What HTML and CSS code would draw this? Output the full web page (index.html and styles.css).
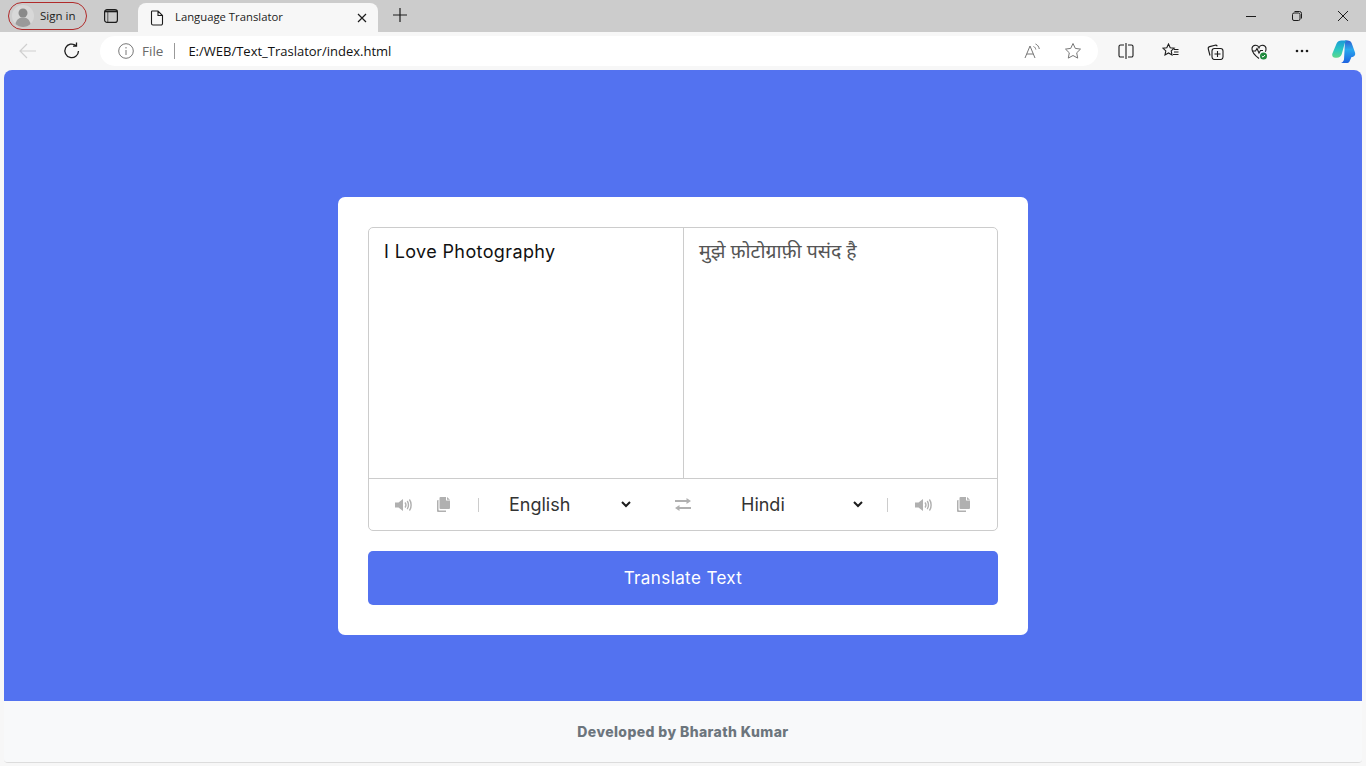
FILE: index.html
```html
<!DOCTYPE html>
<html lang="en">
  <head>
    <title>Language Translator</title>
    <meta charset="utf-8">
    <link rel="stylesheet" href="styles.css">
  </head>
  <body>
    <div class="tabstrip">
      <div class="signin">
        <svg class="avatar" width="22" height="22" viewBox="0 0 22 22"><circle cx="11" cy="11" r="11" fill="#d8d8d8"/><circle cx="11" cy="8" r="4.5" fill="#8a8a8a"/><path d="M3.500 19c1-5 4-6.500 7.500-6.500s6.500 1.500 7.500 6.500c-2 2-4.500 3-7.500 3s-5.500-1-7.500-3z" fill="#9a9a9a"/></svg>
        <span>Sign in</span>
      </div>
      <svg class="tabs-btn" width="16" height="16" viewBox="0 0 16 16" fill="none" stroke="#1c1c1c" stroke-width="1.200"><rect x="1.600" y="1.600" width="12.800" height="12.800" rx="2.500"/><path d="M1.600 3.400h12.800" stroke-width="1.800"/><path d="M4.800 4v10" stroke-width=".7"/></svg>
      <div class="tab">
        <svg width="14" height="16" viewBox="0 0 14 16" fill="none" stroke="#1c1c1c" stroke-width="1.100"><path d="M2 1h6l4.500 4.500V13.500a1.500 1.500 0 0 1-1.500 1.500H3a1.500 1.500 0 0 1-1.500-1.500V2A1 1 0 0 1 2 1zM8 1v4.500h4.500"/></svg>
        <span class="tab-title">Language Translator</span>
        <svg width="10" height="10" viewBox="0 0 10 10" stroke="#1c1c1c" stroke-width="1.200"><path d="M1 1l8 8M9 1l-8 8"/></svg>
      </div>
      <svg class="new-tab" width="16" height="16" viewBox="0 0 16 16" stroke="#1c1c1c" stroke-width="1.200"><path d="M8 1v14M1 8h14"/></svg>
      <div class="win-controls">
        <svg width="10" height="10" viewBox="0 0 10 10" stroke="#1c1c1c"><path d="M0 5.500h10"/></svg>
        <svg width="10" height="10" viewBox="0 0 10 10" fill="none" stroke="#1c1c1c"><rect x=".5" y="2" width="7.500" height="7.500" rx="1.500"/><path d="M2.500 .5h5a2 2 0 0 1 2 2v5"/></svg>
        <svg width="10" height="10" viewBox="0 0 10 10" stroke="#1c1c1c"><path d="M0 0l10 10M10 0L0 10"/></svg>
      </div>
    </div>

    <div class="toolbar">
      <svg class="back" width="18" height="16" viewBox="0 0 18 16" fill="none" stroke="#cfcfcf" stroke-width="1.200"><path d="M17 8H1M8 1L1 8l7 7"/></svg>
      <svg class="reload" width="18" height="18" viewBox="0 0 18 18" fill="none" stroke="#1c1c1c" stroke-width="1.300"><path d="M15.500 9A6.800 6.800 0 1 1 13 3.600M13.500 .5v3.600H10"/></svg>
      <div class="address">
        <svg width="16" height="16" viewBox="0 0 16 16" fill="none" stroke="#777" stroke-width="1"><circle cx="8" cy="8" r="7.300"/><path d="M8 7v5M8 4v1.500"/></svg>
        <span class="file-label">File</span>
        <span class="addr-sep"></span>
        <span class="url">E:/WEB/Text_Traslator/index.html</span>
        <svg class="read-aloud" width="17" height="16" viewBox="0 0 17 16" fill="none" stroke="#777" stroke-width="1"><path d="M1 15L6 3l5 12M2.800 11h6.500M9.500 3.500c1.300.5 2 1.500 2.300 3M11.500 1c2 .8 3.300 2.500 3.800 5"/></svg>
        <svg class="fav" width="18" height="18" viewBox="0 0 18 18" fill="none" stroke="#777" stroke-width="1"><path d="M9 1.500l2.300 4.900 5.200.7-3.800 3.700 1 5.300L9 13.500l-4.700 2.600 1-5.300L1.500 7.100l5.200-.7z"/></svg>
      </div>
      <div class="tools">
        <svg width="16" height="16" viewBox="0 0 16 16" fill="none" stroke="#1c1c1c" stroke-width="1.100"><path d="M6 2H2.500A1.500 1.500 0 0 0 1 3.500v9A1.500 1.500 0 0 0 2.500 14H6M10 2h3.500A1.500 1.500 0 0 1 15 3.500v9a1.500 1.500 0 0 1-1.500 1.500H10M8 0v16"/></svg>
        <svg width="17" height="16" viewBox="0 0 17 16" fill="none" stroke="#1c1c1c" stroke-width="1.100"><path d="M6.500 1l1.700 3.700 4 .4-3 2.800.8 4-3.500-2-3.500 2 .8-4-3-2.800 4-.4zM12 6.500h4.500M12 9h4.500M11 11.500h5.500"/></svg>
        <svg width="17" height="17" viewBox="0 0 17 17" fill="none" stroke="#1c1c1c" stroke-width="1.100"><path d="M3 12.500L1.300 6a2 2 0 0 1 1.400-2.400L8 2.200a2 2 0 0 1 2.300 1"/><rect x="5" y="5.500" width="11" height="11" rx="2.500" fill="#f7f7f7"/><path d="M10.500 8v6M7.500 11h6"/></svg>
        <svg class="tool-health" width="17" height="17" viewBox="0 0 17 17" fill="none"><path d="M8 15.500C4 12.500 1 10 1 6a3.600 3.600 0 0 1 7-1.300A3.600 3.600 0 0 1 15 6c0 1-.2 2-.7 2.800M1.500 8h3l1.500-2.500 2 4.500 1.500-2.500h2.500" stroke="#1c1c1c" stroke-width="1.100"/><circle cx="12.500" cy="13" r="3.500" fill="#1e8a3c"/><path d="M10.800 13l1.200 1.200 2-2.200" stroke="#fff"/></svg>
        <svg class="tool-more" width="14" height="4" viewBox="0 0 14 4" fill="#1c1c1c"><circle cx="2" cy="2" r="1.300"/><circle cx="7" cy="2" r="1.300"/><circle cx="12" cy="2" r="1.300"/></svg>
        <svg class="copilot" width="24" height="24" viewBox="0 0 24 24"><defs><linearGradient id="cpa" x1="0" y1="0" x2="0" y2="1"><stop offset="0" stop-color="#1a9bd8"/><stop offset=".55" stop-color="#2cc8c0"/><stop offset="1" stop-color="#5ed88a"/></linearGradient><linearGradient id="cpb" x1="0" y1="0" x2="0" y2="1"><stop offset="0" stop-color="#2f5fd0"/><stop offset=".4" stop-color="#2aa8ee"/><stop offset="1" stop-color="#1e62e0"/></linearGradient></defs><path d="M13 1.500h2.500c2.300 0 3.700 1.200 4.300 3l3.200 9c.8 2.800-1 4.500-3.500 4.500l-2 4.500c-.6 1-1.700 1.500-3 1.500H9c1.500-.6 2.500-1.800 3-3.500z" fill="url(#cpb)"/><path d="M9.500 1.500h7c-2 0-3.300 1.300-3.900 3.200L9.800 15c-.7 2.300-2.600 3.800-5 3.800H3.300C1 18.800-.4 16.800.4 14.500L4.600 4.500C5.300 2.600 7.300 1.500 9.500 1.500z" fill="url(#cpa)"/></svg>
      </div>
    </div>

    <div class="page">
      <main class="stage">
        <div class="card">
          <div class="wrapper">
            <div class="text-input">
              <textarea class="from-text" spellcheck="false">I Love Photography</textarea>
              <textarea class="to-text" spellcheck="false" readonly>मुझे फ़ोटोग्राफ़ी पसंद है</textarea>
            </div>
            <div class="controls">
              <svg class="speak" width="17" height="14" viewBox="0 0 17 14"><path d="M0 4.500h3.500L8 1v12L3.500 9.500H0z" fill="#b0b0b0"/><path d="M10 4.500c1 1.300 1 3.700 0 5M12.200 3c1.700 2 1.700 6 0 8M14.400 1.500c2.300 3 2.300 8 0 11" fill="none" stroke="#b0b0b0" stroke-width="1.400"/></svg>
              <svg class="copy" width="13" height="15" viewBox="0 0 13 15" fill="#b0b0b0"><path d="M3.500 0h5.500v3.500h4V11a1 1 0 0 1-1 1H3.500a1 1 0 0 1-1-1V1a1 1 0 0 1 1-1zM10 0l3 2.700h-3zM1.500 3v9.500a1 1 0 0 0 1 1H9V15H1a1 1 0 0 1-1-1V4a1 1 0 0 1 1-1z"/></svg>
              <span class="ctl-sep first"></span>
              <div class="lang">
                <span>English</span>
                <svg width="10" height="7" viewBox="0 0 10 7" fill="none" stroke="#1c1c1c" stroke-width="2"><path d="M1 1l4 4 4-4"/></svg>
              </div>
              <svg class="swap" width="16" height="13" viewBox="0 0 16 13" fill="#b0b0b0"><path d="M0 2h11.500V0L16 3l-4.500 3V4H0zM16 9H4.500V7L0 10l4.500 3v-2H16z"/></svg>
              <div class="lang hindi">
                <span>Hindi</span>
                <svg width="10" height="7" viewBox="0 0 10 7" fill="none" stroke="#1c1c1c" stroke-width="2"><path d="M1 1l4 4 4-4"/></svg>
              </div>
              <span class="ctl-sep last"></span>
              <svg class="speak" width="17" height="14" viewBox="0 0 17 14"><path d="M0 4.500h3.500L8 1v12L3.500 9.500H0z" fill="#b0b0b0"/><path d="M10 4.500c1 1.300 1 3.700 0 5M12.200 3c1.700 2 1.700 6 0 8M14.400 1.500c2.300 3 2.300 8 0 11" fill="none" stroke="#b0b0b0" stroke-width="1.400"/></svg>
              <svg class="copy" width="13" height="15" viewBox="0 0 13 15" fill="#b0b0b0"><path d="M3.500 0h5.500v3.500h4V11a1 1 0 0 1-1 1H3.500a1 1 0 0 1-1-1V1a1 1 0 0 1 1-1zM10 0l3 2.700h-3zM1.500 3v9.500a1 1 0 0 0 1 1H9V15H1a1 1 0 0 1-1-1V4a1 1 0 0 1 1-1z"/></svg>
            </div>
          </div>
          <button class="translate">Translate Text</button>
        </div>
      </main>
      <footer class="footer">Developed by Bharath Kumar</footer>
    </div>
  </body>
</html>
```

FILE: styles.css
```css
html, body {
  height: 100%;
  margin: 0;
}
body {
  height: 766px;
  overflow: hidden;
  background: #f7f7f7;
  font-family: "Segoe UI", "Open Sans", "Noto Sans", sans-serif;
  color: #1c1c1c;
}
svg {
  display: block;
  flex: none;
}

/* browser frame */
.tabstrip {
  display: flex;
  align-items: flex-end;
  height: 32px;
  padding-left: 8px;
  background: #cccccc;
}
.signin {
  display: flex;
  align-items: center;
  box-sizing: border-box;
  width: 79px;
  height: 28px;
  margin-bottom: 2px;
  padding-left: 3px;
  border: 1.5px solid #b02a2a;
  border-radius: 14px;
  font-size: 11.500px;
}
.signin span {
  margin-left: 6px;
  padding-bottom: 1px;
}
.tabs-btn {
  margin: 0 0 8px 16px;
}
.tab {
  display: flex;
  align-items: center;
  width: 240px;
  height: 29px;
  box-sizing: border-box;
  margin-left: 19px;
  padding: 0 11px 0 12px;
  background: #f7f7f7;
  border-radius: 8px 8px 0 0;
  font-size: 11.300px;
}
.tab-title {
  flex: 1;
  margin-left: 11px;
  padding-bottom: 3px;
}
.new-tab {
  margin: 0 0 9px 14px;
}
.win-controls {
  display: flex;
  gap: 36px;
  margin: 0 18px 11px auto;
}
.toolbar {
  display: flex;
  align-items: center;
  height: 38px;
  padding-left: 19px;
}
.reload {
  margin-left: 26px;
}
.address {
  display: flex;
  align-items: center;
  box-sizing: border-box;
  width: 998px;
  height: 30px;
  margin-left: 19px;
  padding: 0 16px 0 18px;
  background: #fff;
  border-radius: 15px;
  font-size: 13px;
}
.file-label {
  margin-left: 8px;
  font-size: 13.500px;
  color: #6a6a6a;
}
.addr-sep {
  width: 1px;
  height: 16px;
  margin: 0 13px 0 11px;
  background: #999;
}
.url {
  flex: 1;
  color: #111;
}
.fav {
  margin-left: 23px;
}
.tools {
  display: flex;
  align-items: center;
  gap: 28px;
  margin-left: 20px;
}
.tool-health,
.tool-more {
  margin-left: -1px;
}
.tools .copilot {
  margin-left: -5px;
}

/* page */
.page {
  display: flex;
  flex-direction: column;
  height: 693px;
  margin: 0 4px;
  overflow: hidden;
  border-radius: 8px 8px 4px 4px;
  border-bottom: 1px solid #dcdcdc;
  box-sizing: border-box;
}
.stage {
  display: flex;
  align-items: flex-start;
  justify-content: center;
  height: 631px;
  box-sizing: border-box;
  padding-top: 127px;
  flex: none;
  background: #5372f0;
}
.card {
  box-sizing: border-box;
  width: 690px;
  height: 438px;
  padding: 30px;
  background: #fff;
  border-radius: 7px;
}
.wrapper {
  height: 304px;
  box-sizing: border-box;
  border: 1px solid #ccc;
  border-radius: 5px;
}
.text-input {
  display: flex;
  height: 250px;
  border-bottom: 1px solid #ccc;
}
textarea {
  display: block;
  box-sizing: border-box;
  width: 50%;
  height: 100%;
  margin: 0;
  padding: 10px 15px;
  border: none;
  outline: none;
  resize: none;
  background: none;
  font-size: 18px;
  line-height: 27px;
}
.from-text {
  font-family: Inter, sans-serif;
  color: #111;
  letter-spacing: .38px;
}
.to-text {
  border-left: 1px solid #ccc;
  font-family: "Noto Sans", "Liberation Serif", serif;
  font-size: 19.500px;
  line-height: 25px;
  color: #555;
}
.controls {
  display: flex;
  align-items: center;
  height: 51px;
  padding-left: 26px;
}
.speak {
  margin-right: 25px;
}
.ctl-sep {
  width: 1px;
  height: 14px;
  background: #ccc;
}
.ctl-sep.first {
  margin: 0 30px 0 28px;
}
.ctl-sep.last {
  margin: 0 27px 0 24px;
}
.lang {
  display: flex;
  align-items: center;
  justify-content: space-between;
  width: 122px;
  font-family: Inter, sans-serif;
  font-size: 18px;
  color: #333;
}
.swap {
  margin: 0 50px 0 44px;
}
.translate {
  display: block;
  width: 100%;
  height: 54px;
  margin-top: 20px;
  border: none;
  border-radius: 5px;
  background: #5372f0;
  color: #fff;
  font-family: Inter, sans-serif;
  font-size: 17px;
  letter-spacing: .4px;
}
.footer {
  flex: 1;
  display: flex;
  align-items: center;
  justify-content: center;
  background: #f8f9fa;
  color: #6c757d;
  font-family: Inter, sans-serif;
  font-size: 14px;
  font-weight: 800;
  letter-spacing: .4px;
}
```
